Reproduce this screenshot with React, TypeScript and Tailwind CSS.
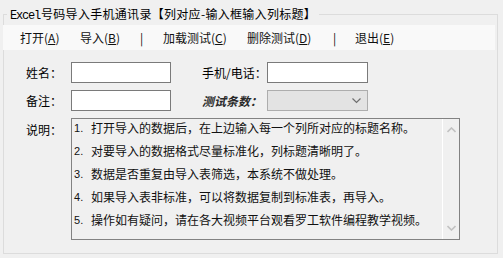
import React from 'react'

const cjk = { fontFamily: '"Noto Sans CJK SC", "Liberation Sans", sans-serif' }

const MenuItem = ({ label, k }: { label: string; k: string }) => (
    <span className="whitespace-nowrap">
        {label}(<span className="underline">{k}</span>)
    </span>
)

const notes = [
    '打开导入的数据后，在上边输入每一个列所对应的标题名称。',
    '对要导入的数据格式尽量标准化，列标题清晰明了。',
    '数据是否重复由导入表筛选，本系统不做处理。',
    '如果导入表非标准，可以将数据复制到标准表，再导入。',
    '操作如有疑问，请在各大视频平台观看罗工软件编程教学视频。',
]

const App = () => {
    return (
        <div className="w-[503px] h-[258px] bg-[#f0f0f0] overflow-hidden text-[12px] text-black" style={cjk}>
            <fieldset className="ml-[3px] mt-[6px] w-[495px] h-[248px] border border-[#dcdcdc] p-0">
                <legend className="ml-[3px] px-[3px] h-[16px] leading-[16px] text-[12px] whitespace-nowrap tracking-[0.3px]">
                    <span className="text-[12px] tracking-[-1.2px] mr-[1px]" style={{ fontFamily: '"Liberation Mono", monospace' }}>Excel</span>
                    号码导入手机通讯录【列对应-输入框输入列标题】
                </legend>

                {/* menu strip */}
                <div className="-ml-[1px] mt-[3px] w-[492px] h-[25px] bg-[#f9f9f9] flex items-center text-[12px] text-[#111]">
                    <div className="ml-[17px] w-[60px]"><MenuItem label="打开" k="A" /></div>
                    <div className="w-[60px]"><MenuItem label="导入" k="B" /></div>
                    <div className="w-[23px]">|</div>
                    <div className="w-[84px]"><MenuItem label="加载测试" k="C" /></div>
                    <div className="w-[86px]"><MenuItem label="删除测试" k="D" /></div>
                    <div className="w-[22px]">|</div>
                    <div><MenuItem label="退出" k="E" /></div>
                </div>

                {/* form */}
                <div className="mt-[12px] pl-[22px] flex flex-col gap-[7px]">
                    <div className="flex items-center h-[21px]">
                        <span className="w-[45px]">姓名：</span>
                        <div className="w-[100px] h-[21px] bg-white border border-[#7a7a7a]" />
                        <span className="ml-[31px] w-[65px] whitespace-nowrap">手机/电话：</span>
                        <div className="w-[101px] h-[21px] bg-white border border-[#7a7a7a]" />
                    </div>
                    <div className="flex items-center h-[21px]">
                        <span className="w-[45px]">备注：</span>
                        <div className="w-[100px] h-[21px] bg-white border border-[#7a7a7a]" />
                        <span className="ml-[31px] w-[65px] whitespace-nowrap italic font-bold text-[#2a2a2a] text-[12px]">测试条数：</span>
                        <div className="w-[101px] h-[21px] bg-[#e3e3e3] border border-[#adadad] flex items-center justify-end pr-[6px]">
                            <svg width="9" height="6" viewBox="0 0 9 6">
                                <path d="M0.5 0.5 L4.5 4.5 L8.5 0.5" fill="none" stroke="#6f6f6f" strokeWidth="1.2" />
                            </svg>
                        </div>
                    </div>
                    <div className="flex items-start">
                        <span className="w-[45px] mt-[3px]">说明：</span>
                        <div className="w-[389px] h-[122px] border border-[#828282] flex">
                            <div className="flex-1 flex flex-col gap-[5px] pt-0 pl-[2px]">
                                {notes.map((n, i) => (
                                    <div key={i} className="h-[18px] leading-[18px] flex whitespace-nowrap text-[#111]">
                                        <span className="w-[17px] text-[11px]" style={{ fontFamily: '"Liberation Sans", sans-serif' }}>{i + 1}.</span>
                                        <span>{n}</span>
                                    </div>
                                ))}
                            </div>
                            <div className="w-[17px] border-l border-white bg-[#f0f0f0] flex flex-col items-center justify-between py-[8px]">
                                <svg width="9" height="6" viewBox="0 0 9 6">
                                    <path d="M0.5 5 L4.5 1 L8.5 5" fill="none" stroke="#c2c2c2" strokeWidth="1.6" />
                                </svg>
                                <svg width="9" height="6" viewBox="0 0 9 6">
                                    <path d="M0.5 1 L4.5 5 L8.5 1" fill="none" stroke="#c2c2c2" strokeWidth="1.6" />
                                </svg>
                            </div>
                        </div>
                    </div>
                </div>
            </fieldset>
        </div>
    )
}

export default App
